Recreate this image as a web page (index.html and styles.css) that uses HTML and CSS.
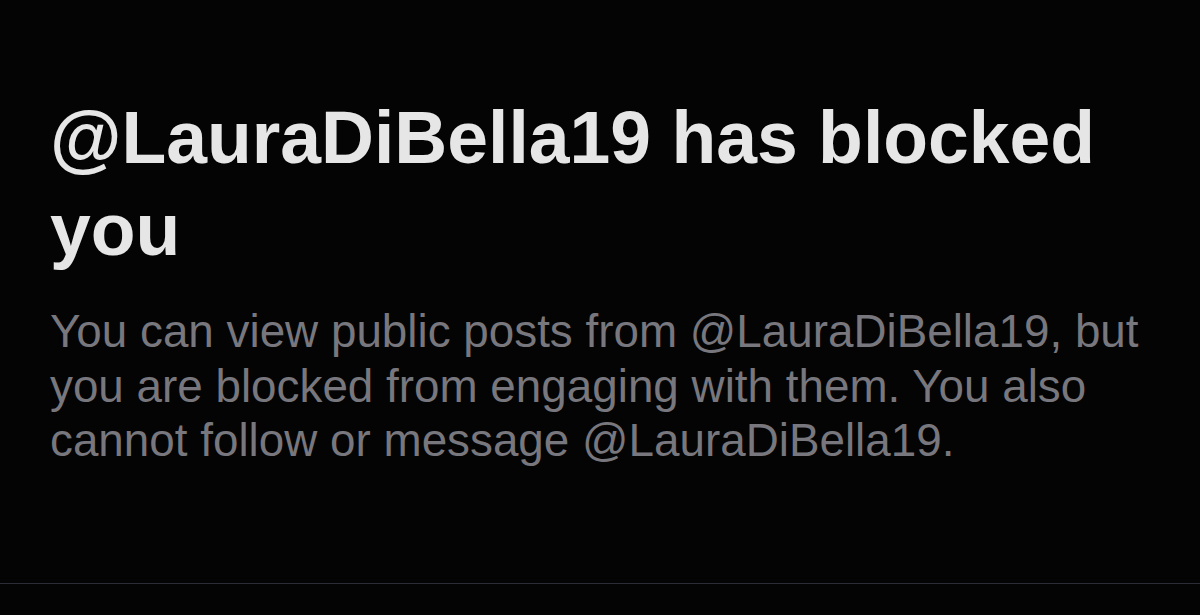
FILE: index.html
```html
<!DOCTYPE html>
<html lang="en">
<head>
<meta charset="utf-8">
<link rel="stylesheet" href="styles.css">
</head>
<body>
<main class="blocked">
  <h1 class="blocked-title">@LauraDiBella19 has blocked you</h1>
  <p class="blocked-text">You can view public posts from @LauraDiBella19, but you are blocked from engaging with them. You also cannot follow or message @LauraDiBella19.</p>
</main>
</body>
</html>
```
FILE: styles.css
```css
html, body {
  margin: 0;
  padding: 0;
  background: #040404;
}
body {
  width: 1200px;
  height: 615px;
  overflow: hidden;
  font-family: "Liberation Sans", Arial, sans-serif;
}
.blocked {
  box-sizing: border-box;
  height: 584px;
  padding: 92px 0 0 50px;
  border-bottom: 1px solid #2c2c36;
}
.blocked-title {
  margin: 0;
  width: 1110px;
  font-size: 73.3px;
  line-height: 92px;
  font-weight: 700;
  color: #e6e6e6;
}
.blocked-text {
  margin: 29px 0 0;
  width: 1110px;
  font-size: 45.8px;
  line-height: 54.5px;
  color: #77777d;
}
```
